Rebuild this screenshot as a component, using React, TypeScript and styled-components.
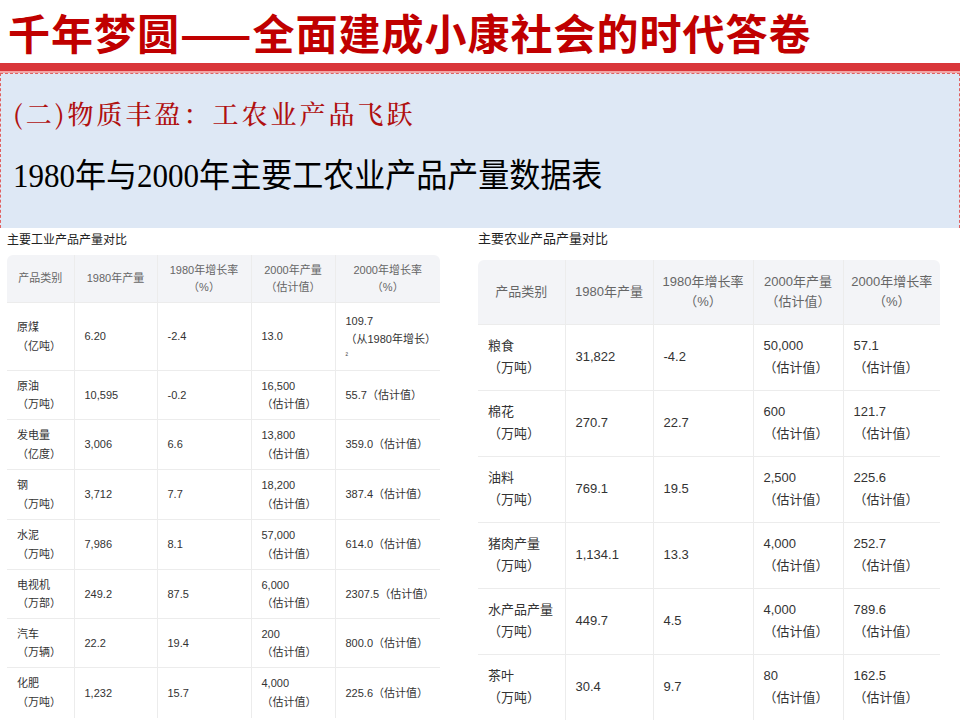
import React from 'react';
import styled, { createGlobalStyle } from 'styled-components';

const Global = createGlobalStyle`
  html, body { margin: 0; padding: 0; background: #fff; }
  body { width: 960px; height: 720px; overflow: hidden; font-family: "Liberation Sans", "Noto Sans CJK SC", sans-serif; }
`;

const Page = styled.div`
  width: 960px;
  height: 720px;
  display: flex;
  flex-direction: column;
  overflow: hidden;
`;

const TitleBar = styled.div`
  height: 68px;
  display: flex;
  align-items: center;
  padding-left: 8px;
  color: #c00000;
  font-family: "Noto Sans CJK SC", sans-serif;
  font-size: 42px;
  font-weight: 700;
  letter-spacing: 1px;
  border-bottom: 8px solid #d9363a;
  box-shadow: 0 2px 0 #f3a5a5;
`;

const Banner = styled.div`
  margin-top: 2px;
  height: 144px;
  background: #dee8f5;
  border: 1px dashed #e06060;
  border-bottom: none;
  padding: 20px 12px 0;
  display: flex;
  flex-direction: column;
  gap: 18px;
`;

const SubTitle = styled.div`
  color: #b01010;
  font-size: 26px;
  letter-spacing: 3px;
  font-family: "Noto Serif CJK SC", "Noto Sans CJK SC", serif;
  font-weight: 500;
`;

const TableTitle = styled.div`
  color: #000;
  font-size: 33px;
  font-family: "Liberation Serif", "Noto Sans CJK SC", serif;
  transform: scaleX(0.94);
  transform-origin: left;
`;

const Tables = styled.div`
  display: flex;
  align-items: flex-start;
`;

const Block = styled.div<{ $left: number; $top: number; $width: number }>`
  margin-left: ${p => p.$left}px;
  margin-top: ${p => p.$top}px;
  width: ${p => p.$width}px;
  flex-shrink: 0;
`;

const Caption = styled.div<{ $size: number; $gap: number }>`
  font-size: ${p => p.$size}px;
  color: #222;
  margin-bottom: ${p => p.$gap}px;
  line-height: 1.2;
`;

const Table = styled.table<{ $size: number }>`
  border-collapse: collapse;
  table-layout: fixed;
  width: 100%;
  font-size: ${p => p.$size}px;
  color: #333;
  border-radius: 6px;
  overflow: hidden;
  th { background: #f3f4f7; color: #666; font-weight: 400; text-align: center; line-height: 1.55; padding: 0 4px; white-space: nowrap; }
  td { line-height: 1.7; border-top: 1px solid #ececec; vertical-align: middle; padding: 0 6px 0 10px; white-space: nowrap; }
  th, td { border-left: 1px solid #ececec; }
  td:first-child, th:first-child { border-left: none; }
`;

type Row = string[][];

const industry: Row[] = [
  [['原煤', '（亿吨）'], ['6.20'], ['-2.4'], ['13.0'], ['109.7', '（从1980年增长）', '²']],
  [['原油', '（万吨）'], ['10,595'], ['-0.2'], ['16,500', '（估计值）'], ['55.7（估计值）']],
  [['发电量', '（亿度）'], ['3,006'], ['6.6'], ['13,800', '（估计值）'], ['359.0（估计值）']],
  [['钢', '（万吨）'], ['3,712'], ['7.7'], ['18,200', '（估计值）'], ['387.4（估计值）']],
  [['水泥', '（万吨）'], ['7,986'], ['8.1'], ['57,000', '（估计值）'], ['614.0（估计值）']],
  [['电视机', '（万部）'], ['249.2'], ['87.5'], ['6,000', '（估计值）'], ['2307.5（估计值）']],
  [['汽车', '（万辆）'], ['22.2'], ['19.4'], ['200', '（估计值）'], ['800.0（估计值）']],
  [['化肥', '（万吨）'], ['1,232'], ['15.7'], ['4,000', '（估计值）'], ['225.6（估计值）']],
];

const agri: Row[] = [
  [['粮食', '（万吨）'], ['31,822'], ['-4.2'], ['50,000', '（估计值）'], ['57.1', '（估计值）']],
  [['棉花', '（万吨）'], ['270.7'], ['22.7'], ['600', '（估计值）'], ['121.7', '（估计值）']],
  [['油料', '（万吨）'], ['769.1'], ['19.5'], ['2,500', '（估计值）'], ['225.6', '（估计值）']],
  [['猪肉产量', '（万吨）'], ['1,134.1'], ['13.3'], ['4,000', '（估计值）'], ['252.7', '（估计值）']],
  [['水产品产量', '（万吨）'], ['449.7'], ['4.5'], ['4,000', '（估计值）'], ['789.6', '（估计值）']],
  [['茶叶', '（万吨）'], ['30.4'], ['9.7'], ['80', '（估计值）'], ['162.5', '（估计值）']],
];

const heads = [['产品类别'], ['1980年产量'], ['1980年增长率', '（%）'], ['2000年产量', '（估计值）'], ['2000年增长率', '（%）']];

const Lines = ({ lines }: { lines: string[] }) => (
  <>
    {lines.map((l, i) => (
      <div key={i} style={l === '²' ? { fontSize: '0.7em' } : undefined}>{l}</div>
    ))}
  </>
);

const DataTable = ({ rows, cols, head, heights, size }: { rows: Row[]; cols: number[]; head: number; heights: number[]; size: number }) => (
  <Table $size={size}>
    <colgroup>
      {cols.map((c, i) => <col key={i} style={{ width: c }} />)}
    </colgroup>
    <thead>
      <tr style={{ height: head }}>
        {heads.map((h, i) => <th key={i}><Lines lines={h} /></th>)}
      </tr>
    </thead>
    <tbody>
      {rows.map((r, i) => (
        <tr key={i} style={{ height: heights[i] }}>
          {r.map((c, j) => <td key={j}><Lines lines={c} /></td>)}
        </tr>
      ))}
    </tbody>
  </Table>
);

export default function App() {
  return (
    <Page>
      <Global />
      <TitleBar>千年梦圆——全面建成小康社会的时代答卷</TitleBar>
      <Banner>
        <SubTitle>(二)物质丰盈：工农业产品飞跃</SubTitle>
        <TableTitle>1980年与2000年主要工农业产品产量数据表</TableTitle>
      </Banner>
      <Tables>
        <Block $left={7} $top={5} $width={433}>
          <Caption $size={12} $gap={7}>主要工业产品产量对比</Caption>
          <DataTable
            rows={industry}
            cols={[67, 83, 94, 84, 105]}
            head={48}
            heights={[68, 49, 50, 50, 50, 49, 49, 50]}
            size={11}
          />
        </Block>
        <Block $left={38} $top={3} $width={462}>
          <Caption $size={13} $gap={13}>主要农业产品产量对比</Caption>
          <DataTable
            rows={agri}
            cols={[87, 88, 100, 90, 97]}
            head={64}
            heights={[66, 66, 66, 66, 66, 66]}
            size={13}
          />
        </Block>
      </Tables>
    </Page>
  );
}
